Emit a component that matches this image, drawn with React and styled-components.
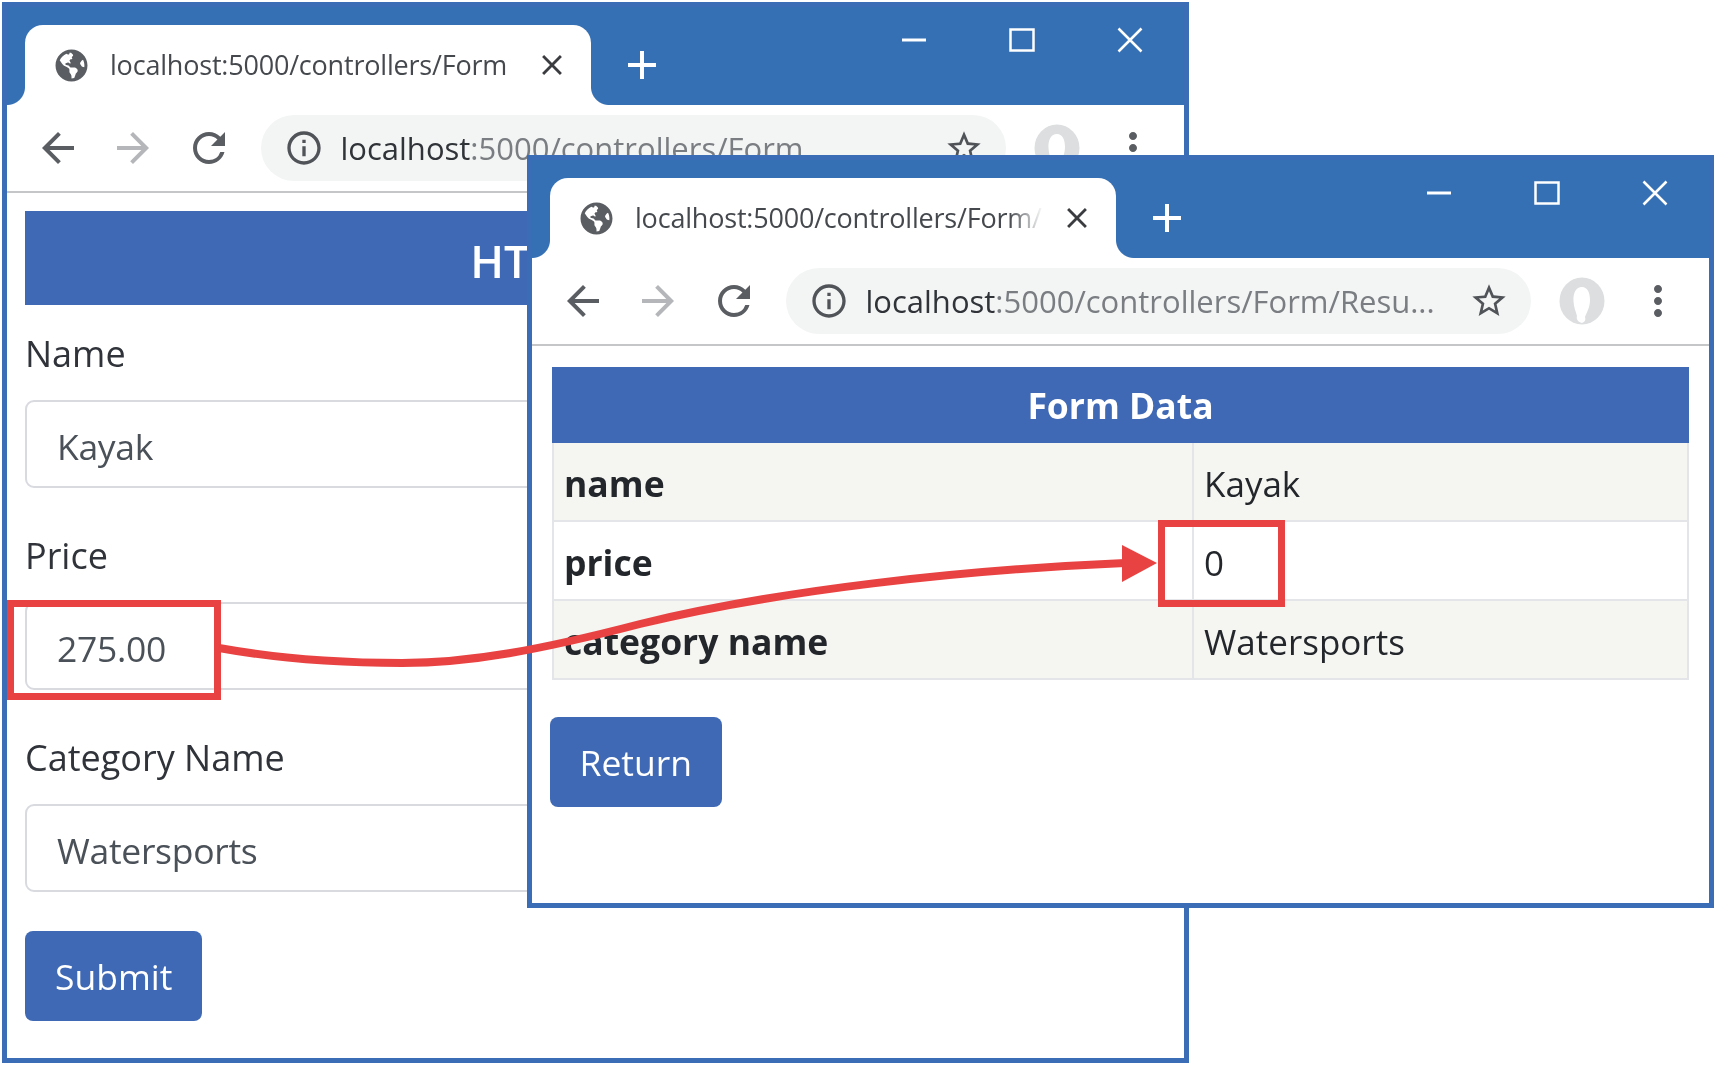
import styled, { createGlobalStyle } from "styled-components"
import { FaGlobeAmericas } from "react-icons/fa"
import { MdAdd, MdArrowBack, MdArrowForward, MdClose, MdInfoOutline, MdMoreVert, MdRefresh, MdStarBorder } from "react-icons/md"

const chromeBlue = "#3570b5"
const pageBlue = "#3f69b4"
const red = "#e94242"

const GlobalStyle = createGlobalStyle`
    html, body {
        margin: 0;
        padding: 0;
        background: #fff;
    }
    body {
        font-family: "Open Sans", "Liberation Sans", sans-serif;
    }
`

const Desktop = styled.div`
    position: relative;
    width: 1716px;
    height: 1065px;
    overflow: hidden;
    filter: blur(0.5px);
`

const Window = styled.div`
    position: absolute;
    left: ${(p) => p.$left}px;
    top: ${(p) => p.$top}px;
    width: 1187px;
    height: ${(p) => p.$height}px;
    box-sizing: border-box;
    border: 5px solid #3a6db5;
    background: #fff;
    display: flex;
    flex-direction: column;
    overflow: hidden;
`

const TitleBar = styled.div`
    height: 98px;
    flex: none;
    display: flex;
    background: ${chromeBlue};
`

const Tab = styled.div`
    position: relative;
    box-sizing: border-box;
    width: 566px;
    height: 80px;
    margin: 18px 0 0 18px;
    padding: 0 22px 0 30px;
    display: flex;
    align-items: center;
    background: #fff;
    border-radius: 18px 18px 0 0;
    &::before, &::after {
        content: "";
        position: absolute;
        bottom: 0;
        width: 18px;
        height: 18px;
    }
    &::before {
        left: -18px;
        background: radial-gradient(circle at 0 0, ${chromeBlue} 17.5px, #fff 18.5px);
    }
    &::after {
        right: -18px;
        background: radial-gradient(circle at 100% 0, ${chromeBlue} 17.5px, #fff 18.5px);
    }
`

const TabTitle = styled.div`
    flex: 1;
    min-width: 0;
    margin-left: 22px;
    padding-bottom: 2px;
    font-size: 27px;
    letter-spacing: -0.2px;
    white-space: nowrap;
    overflow: hidden;
    color: #45494e;
    ${(p) => p.$fade && `
        -webkit-mask-image: linear-gradient(to right, #000 88%, transparent 96%);
        mask-image: linear-gradient(to right, #000 88%, transparent 96%);
    `}
`

const NewTab = styled.div`
    margin: 18px 0 0 27px;
    height: 80px;
    display: flex;
    align-items: center;
    color: #fff;
`

const WindowControls = styled.div`
    margin-left: auto;
    display: flex;
`

const ControlSlot = styled.div`
    width: 108px;
    height: 66px;
    display: flex;
    align-items: center;
    justify-content: center;
`

const Toolbar = styled.div`
    height: 86px;
    flex: none;
    padding-left: 13px;
    display: flex;
    align-items: center;
    border-bottom: 2px solid #c4c6c8;
`

const ToolSlot = styled.div`
    width: 75.5px;
    flex: none;
    display: flex;
    align-items: center;
    justify-content: center;
    color: ${(p) => (p.$disabled ? "#b4b6b9" : "#5a5d62")};
`

const AddressBar = styled.div`
    width: 745px;
    height: 66px;
    flex: none;
    box-sizing: border-box;
    margin: 0 14px;
    padding: 0 22px 0 23px;
    display: flex;
    align-items: center;
    background: #f3f4f4;
    border-radius: 33px;
    color: #505357;
`

const AddressText = styled.div`
    flex: 1;
    min-width: 0;
    margin-left: 17px;
    font-size: 31px;
    white-space: nowrap;
    overflow: hidden;
    color: #7a7d81;
`

const Host = styled.span`
    color: #303338;
`

const Content = styled.div`
    padding: 18px 18px 0;
`

const Banner = styled.div`
    height: 94px;
    box-sizing: border-box;
    padding-top: 4px;
    margin-bottom: 24px;
    display: flex;
    align-items: center;
    justify-content: center;
    background: ${pageBlue};
    color: #fff;
    font-size: 45px;
    font-weight: 600;
`

const FormGroup = styled.div`
    margin-bottom: 43px;
`

const FieldLabel = styled.div`
    height: 50px;
    margin-bottom: 21px;
    line-height: 50px;
    font-size: 36px;
    color: #30343a;
`

const Field = styled.div`
    box-sizing: border-box;
    height: 88px;
    padding: 3px 30px 0;
    display: flex;
    align-items: center;
    border: 2px solid #d8dae0;
    border-radius: 9px;
    font-size: 35.5px;
    letter-spacing: -0.3px;
    color: #4b5158;
`

const PrimaryButton = styled.div`
    display: inline-flex;
    box-sizing: border-box;
    height: 90px;
    padding: 0 ${(p) => p.$pad}px;
    margin-top: ${(p) => p.$top}px;
    align-items: center;
    background: ${pageBlue};
    border-radius: 8px;
    color: #fff;
    font-size: 35.5px;
`

const DataTable = styled.table`
    width: calc(100% - 4px);
    margin: 3px 2px 0;
    border-collapse: collapse;
    table-layout: fixed;
    font-size: 35.5px;
    color: #23272c;
    td, th {
        border: 2px solid #e3e5e9;
        padding: 3px 10px 0;
        text-align: left;
    }
`

const KeyColumn = styled.col`
    width: 640px;
`

const HeaderCell = styled.th`
    && {
        height: 72px;
        padding: 0;
        background: ${pageBlue};
        border-color: ${pageBlue};
        color: #fff;
        text-align: center;
        font-size: 35.5px;
        font-weight: 700;
    }
`

const Row = styled.tr`
    height: 79px;
    background: ${(p) => (p.$striped ? "#f5f5f1" : "#fff")};
`

const KeyCell = styled.th`
    font-weight: 700;
`

const ValueCell = styled.td`
    font-size: 35px;
`

const Annotations = styled.svg`
    position: absolute;
    left: 0;
    top: 0;
    pointer-events: none;
`

const MinimizeIcon = () => (
    <svg width="26" height="4" viewBox="0 0 26 4">
        <path d="M1 2h24" stroke="#fff" strokeWidth="3" />
    </svg>
)

const MaximizeIcon = () => (
    <svg width="26" height="24" viewBox="0 0 26 24" fill="none">
        <rect x="1.5" y="1.5" width="23" height="21" stroke="#fff" strokeWidth="2.5" />
    </svg>
)

const CloseIcon = () => (
    <svg width="26" height="26" viewBox="0 0 26 26" fill="none">
        <path d="M1.5 1.5l23 23M24.5 1.5l-23 23" stroke="#fff" strokeWidth="2.5" />
    </svg>
)

const Avatar = () => (
    <svg width="46" height="48" viewBox="0 0 46 48">
        <ellipse cx="23" cy="24" rx="22.5" ry="23.5" fill="#dcdedf" />
        <path d="M23 10c-6 0-9 6-8.5 14 .4 7 2.5 11 3.5 15-1 3 1 6 5 7 3-1 4-3 3-6 2-5 5-10 5-17 0-8-3-13-8-13z" fill="#fff" />
    </svg>
)

const Browser = ({ left, top, height, title, fade, host, path, children }) => (
    <Window $left={left} $top={top} $height={height}>
        <TitleBar>
            <Tab>
                <FaGlobeAmericas size={33} color="#5a5d62" />
                <TabTitle $fade={fade}>{title}</TabTitle>
                <MdClose size={34} color="#3a3c40" />
            </Tab>
            <NewTab><MdAdd size={48} /></NewTab>
            <WindowControls>
                <ControlSlot><MinimizeIcon /></ControlSlot>
                <ControlSlot><MaximizeIcon /></ControlSlot>
                <ControlSlot><CloseIcon /></ControlSlot>
            </WindowControls>
        </TitleBar>
        <Toolbar>
            <ToolSlot><MdArrowBack size={48} /></ToolSlot>
            <ToolSlot $disabled><MdArrowForward size={48} /></ToolSlot>
            <ToolSlot><MdRefresh size={48} /></ToolSlot>
            <AddressBar>
                <MdInfoOutline size={40} />
                <AddressText><Host>{host}</Host>{path}</AddressText>
                <MdStarBorder size={40} />
            </AddressBar>
            <ToolSlot><Avatar /></ToolSlot>
            <ToolSlot><MdMoreVert size={48} /></ToolSlot>
        </Toolbar>
        <Content>{children}</Content>
    </Window>
)

const fields = [
    { label: "Name", value: "Kayak" },
    { label: "Price", value: "275.00" },
    { label: "Category Name", value: "Watersports" },
]

const rows = [
    { name: "name", value: "Kayak", striped: true },
    { name: "price", value: "0" },
    { name: "category name", value: "Watersports", striped: true },
]

const App = () => {
    return (
        <Desktop>
            <GlobalStyle />
            <Browser left={2} top={2} height={1061} title="localhost:5000/controllers/Form" host="localhost" path=":5000/controllers/Form">
                <Banner>HTML Form</Banner>
                {fields.map((field) => (
                    <FormGroup key={field.label}>
                        <FieldLabel>{field.label}</FieldLabel>
                        <Field>{field.value}</Field>
                    </FormGroup>
                ))}
                <PrimaryButton $pad={30} $top={-4}>Submit</PrimaryButton>
            </Browser>
            <Browser left={527} top={155} height={753} title="localhost:5000/controllers/Form/Results" fade host="localhost" path=":5000/controllers/Form/Resu...">
                <DataTable>
                    <colgroup>
                        <KeyColumn />
                        <col />
                    </colgroup>
                    <thead>
                        <tr><HeaderCell colSpan={2}>Form Data</HeaderCell></tr>
                    </thead>
                    <tbody>
                        {rows.map((row) => (
                            <Row key={row.name} $striped={row.striped}>
                                <KeyCell>{row.name}</KeyCell>
                                <ValueCell>{row.value}</ValueCell>
                            </Row>
                        ))}
                    </tbody>
                </DataTable>
                <PrimaryButton $pad={29.5} $top={37}>Return</PrimaryButton>
            </Browser>
            <Annotations width="1716" height="1065" viewBox="0 0 1716 1065" fill="none">
                <rect x="10.5" y="603.5" width="207" height="93" stroke={red} strokeWidth="7" />
                <rect x="1161.5" y="523.5" width="120" height="80" stroke={red} strokeWidth="7" />
                <path d="M219 648C285 660 345 663 402 663C470 663 540 650 640 624C780 590 960 570 1125 563" stroke={red} strokeWidth="8" />
                <path d="M1157 563L1122 545V582Z" fill={red} />
            </Annotations>
        </Desktop>
    )
}

export default App
